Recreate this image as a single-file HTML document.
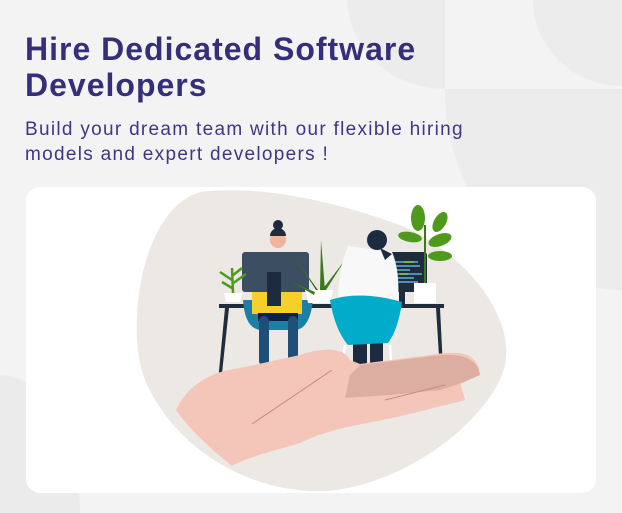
<!DOCTYPE html>
<html><head><meta charset="utf-8"><style>
body{margin:0;width:622px;height:513px;overflow:hidden;background:#f3f3f3;position:relative;font-family:"Liberation Sans",sans-serif}
.bg{position:absolute;left:0;top:0}
h1{position:absolute;left:25px;top:31px;margin:0;font-size:32px;line-height:36px;font-weight:bold;color:#352f7a;letter-spacing:1px;white-space:nowrap}
p{position:absolute;left:25px;top:117px;margin:0;font-size:19px;line-height:25px;color:#3d3785;letter-spacing:1.3px;white-space:nowrap}
.card{position:absolute;left:26px;top:187px;width:570px;height:306px;background:#fff;border-radius:14px}
svg.ill{position:absolute;left:0;top:0}
</style></head><body>
<svg class="bg" width="622" height="513">
<path d="M347 0 A98 92 0 0 0 445 89 L445 0Z" fill="#ececec"/>
<path d="M533 0 A89 86 0 0 0 622 86 L622 0Z" fill="#ececec"/>
<path d="M445 89 A177 200 0 0 0 622 290 L622 89Z" fill="#ececec"/>
<path d="M0 375 A80 140 0 0 1 80 513 L0 513Z" fill="#ebebeb"/>
</svg>
<h1>Hire Dedicated Software<br>Developers</h1>
<p>Build your dream team with our flexible hiring<br>models and expert developers !</p>
<div class="card"></div>
<svg class="ill" width="622" height="513">
<path d="M200 192 C260 185 330 200 400 225 C470 255 515 320 505 365 C495 410 420 480 330 491 C240 495 170 440 145 380 C125 330 140 210 200 192Z" fill="#ece9e4"/>
<rect x="219" y="304" width="225" height="4" fill="#1f2d3d"/>
<path d="M225 308 L217 392 L220 392 L229 308Z M436 308 L441 388 L444 388 L440 308Z" fill="#1f2d3d"/>
<circle cx="278" cy="225" r="5" fill="#1c2b3e"/>
<circle cx="278" cy="240" r="8" fill="#f0b59c"/>
<path d="M270 236 A8 8 0 0 1 286 236Z" fill="#1c2b3e"/>
<path d="M243 300 Q245 330 262 330 L296 330 Q310 328 313 300Z" fill="#1b7fa6"/>
<rect x="252" y="290" width="50" height="24" fill="#f6d02a"/>
<rect x="258" y="313" width="40" height="8" fill="#0b1f4a"/>
<rect x="259" y="316" width="10" height="50" rx="5" fill="#1f4e79"/>
<rect x="288" y="316" width="10" height="50" rx="5" fill="#1f4e79"/>
<rect x="242" y="252" width="67" height="40" rx="3" fill="#3b4e62"/>
<rect x="267" y="272" width="14" height="34" fill="#1c2b3e"/>
<path d="M224 293 L242 293 L240 302 L226 302Z" fill="#fff"/>
<path d="M233 293 L232 268 M232 280 L220 272 M232 284 L246 274 M232 288 L222 282 M232 276 L242 268" stroke="#4e9a1c" stroke-width="2.5" fill="none"/>
<path d="M305 290 L333 290 L330 303 L308 303Z" fill="#fff"/>
<path d="M320 290 L321 240 L325 290Z M318 290 L295 258 L316 290Z M322 290 L345 260 L326 290Z M315 292 L292 282 L314 295Z" fill="#3a7a1a"/>
<rect x="380" y="252" width="47" height="40" rx="3" fill="#1e2d3d"/>
<g stroke-width="1.5"><path d="M392 262 H418 M396 266 H420 M392 270 H410 M396 274 H422 M392 278 H414 M396 282 H418" stroke="#5bb3d0"/><path d="M404 262 H414 M400 274 H408" stroke="#8dc63f"/></g>
<rect x="399" y="292" width="6" height="14" fill="#1e2d3d"/>
<rect x="414" y="283" width="22" height="20" fill="#fff"/>
<path d="M425 283 L425 225" stroke="#3a7a1a" stroke-width="2"/>
<g fill="#4e9a1c">
<ellipse cx="418" cy="218" rx="7" ry="13"/>
<ellipse cx="440" cy="222" rx="6" ry="11" transform="rotate(30 440 222)"/>
<ellipse cx="410" cy="237" rx="12" ry="5" transform="rotate(10 410 237)"/>
<ellipse cx="440" cy="240" rx="12" ry="6" transform="rotate(-20 440 240)"/>
<ellipse cx="440" cy="256" rx="12" ry="5"/>
</g>
<rect x="353" y="340" width="14" height="45" fill="#1c2b3e"/>
<rect x="370" y="340" width="13" height="45" fill="#1c2b3e"/>
<ellipse cx="359" cy="386" rx="5" ry="5" fill="#1c2b3e"/>
<ellipse cx="376" cy="386" rx="5" ry="5" fill="#1c2b3e"/>
<path d="M348 246 L392 252 Q400 270 398 303 L338 303 Q338 270 348 246Z" fill="#f8f8f8"/>
<circle cx="377" cy="240" r="10" fill="#1c2b3e"/>
<path d="M380 248 L392 254 L385 260 Z" fill="#1c2b3e"/>
<path d="M330 300 Q360 290 402 302 Q398 330 388 343 L348 345 Q335 330 330 300Z" fill="#00acc9"/>
<path d="M345 345 L340 393 M390 345 L393 393" stroke="#fff" stroke-width="2.5"/>
<path d="M176 410 C185 390 205 372 240 368 L300 355 C320 348 343 346 350 360 L360 364 L430 355 C460 350 478 352 480 375 L460 382 L465 400 L397 417 C360 425 330 428 300 443 C270 452 245 458 232 466 C210 448 190 430 176 410Z" fill="#f4c6ba"/>
<path d="M350 375 L360 365 L425 357 C455 352 477 355 480 375 L462 383 L440 390 L390 395 L345 398Z" fill="#dcaea2"/>
<path d="M252 424 L332 370 M385 400 L445 385" stroke="#c08e82" stroke-width="1"/>
</svg>
</body></html>
